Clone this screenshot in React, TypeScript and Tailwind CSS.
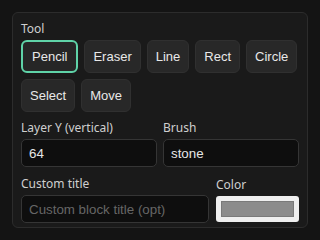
import { useState } from 'react'

const tools = ['Pencil', 'Eraser', 'Line', 'Rect', 'Circle', 'Select', 'Move']

export default function App() {
  const [tool, setTool] = useState('Pencil')
  const [layerY, setLayerY] = useState('64')
  const [brush, setBrush] = useState('stone')
  const [title, setTitle] = useState('')

  const labelCls = "block text-[12px] leading-[15px] mb-1 text-[#cfcfcf] font-['Noto_Sans',sans-serif]"
  const inputCls =
    "w-full h-[28px] rounded-[5px] border border-[#353535] bg-[#0e0e0e] px-[7px] text-[13.333px] text-[#e6e6e6] placeholder:text-[#666] outline-none font-['Liberation_Sans',Arial,sans-serif]"

  return (
    <div className="min-h-[240px] bg-[#141414] p-3">
      <div className="w-full rounded-[6px] border border-[#2c2c2c] bg-[#1a1a1a] px-2 pt-2 pb-[4px]">
        {/* Tool picker */}
        <div>
          <span className={labelCls}>Tool</span>
          <div className="flex flex-wrap gap-[6px]">
            {tools.map((t) => (
              <button
                key={t}
                onClick={() => setTool(t)}
                className={
                  tool === t
                    ? "h-[33px] rounded-[6px] border-2 border-[#5fd3a8] bg-[#262626] px-[9px] text-[13px] text-[#e8e8e8] font-['Liberation_Sans',Arial,sans-serif]"
                    : "h-[33px] rounded-[6px] border border-[#303030] bg-[#282828] px-2 text-[13px] text-[#e8e8e8] font-['Liberation_Sans',Arial,sans-serif]"
                }
              >
                {t}
              </button>
            ))}
          </div>
        </div>

        {/* Layer + brush */}
        <div className="mt-2 grid grid-cols-2 gap-[6px]">
          <div>
            <span className={labelCls}>Layer Y (vertical)</span>
            <input className={inputCls} value={layerY} onChange={(e) => setLayerY(e.target.value)} />
          </div>
          <div>
            <span className={labelCls}>Brush</span>
            <input className={inputCls} value={brush} onChange={(e) => setBrush(e.target.value)} />
          </div>
        </div>

        {/* Title + color */}
        <div className="mt-[9px] grid grid-cols-[1fr_83px] gap-[7px]">
          <div>
            <span className={labelCls}>Custom title</span>
            <input
              className={inputCls}
              placeholder="Custom block title (opt)"
              value={title}
              onChange={(e) => setTitle(e.target.value)}
            />
          </div>
          <div>
            <span className={labelCls + ' mt-[1px]'}>Color</span>
            <div className="h-[26px] rounded-[3px] bg-[#efefef] px-[5px] py-[5px]">
              <div className="h-full border border-[#7a7a7a] bg-[#8c8c8c]" />
            </div>
          </div>
        </div>
      </div>
    </div>
  )
}
